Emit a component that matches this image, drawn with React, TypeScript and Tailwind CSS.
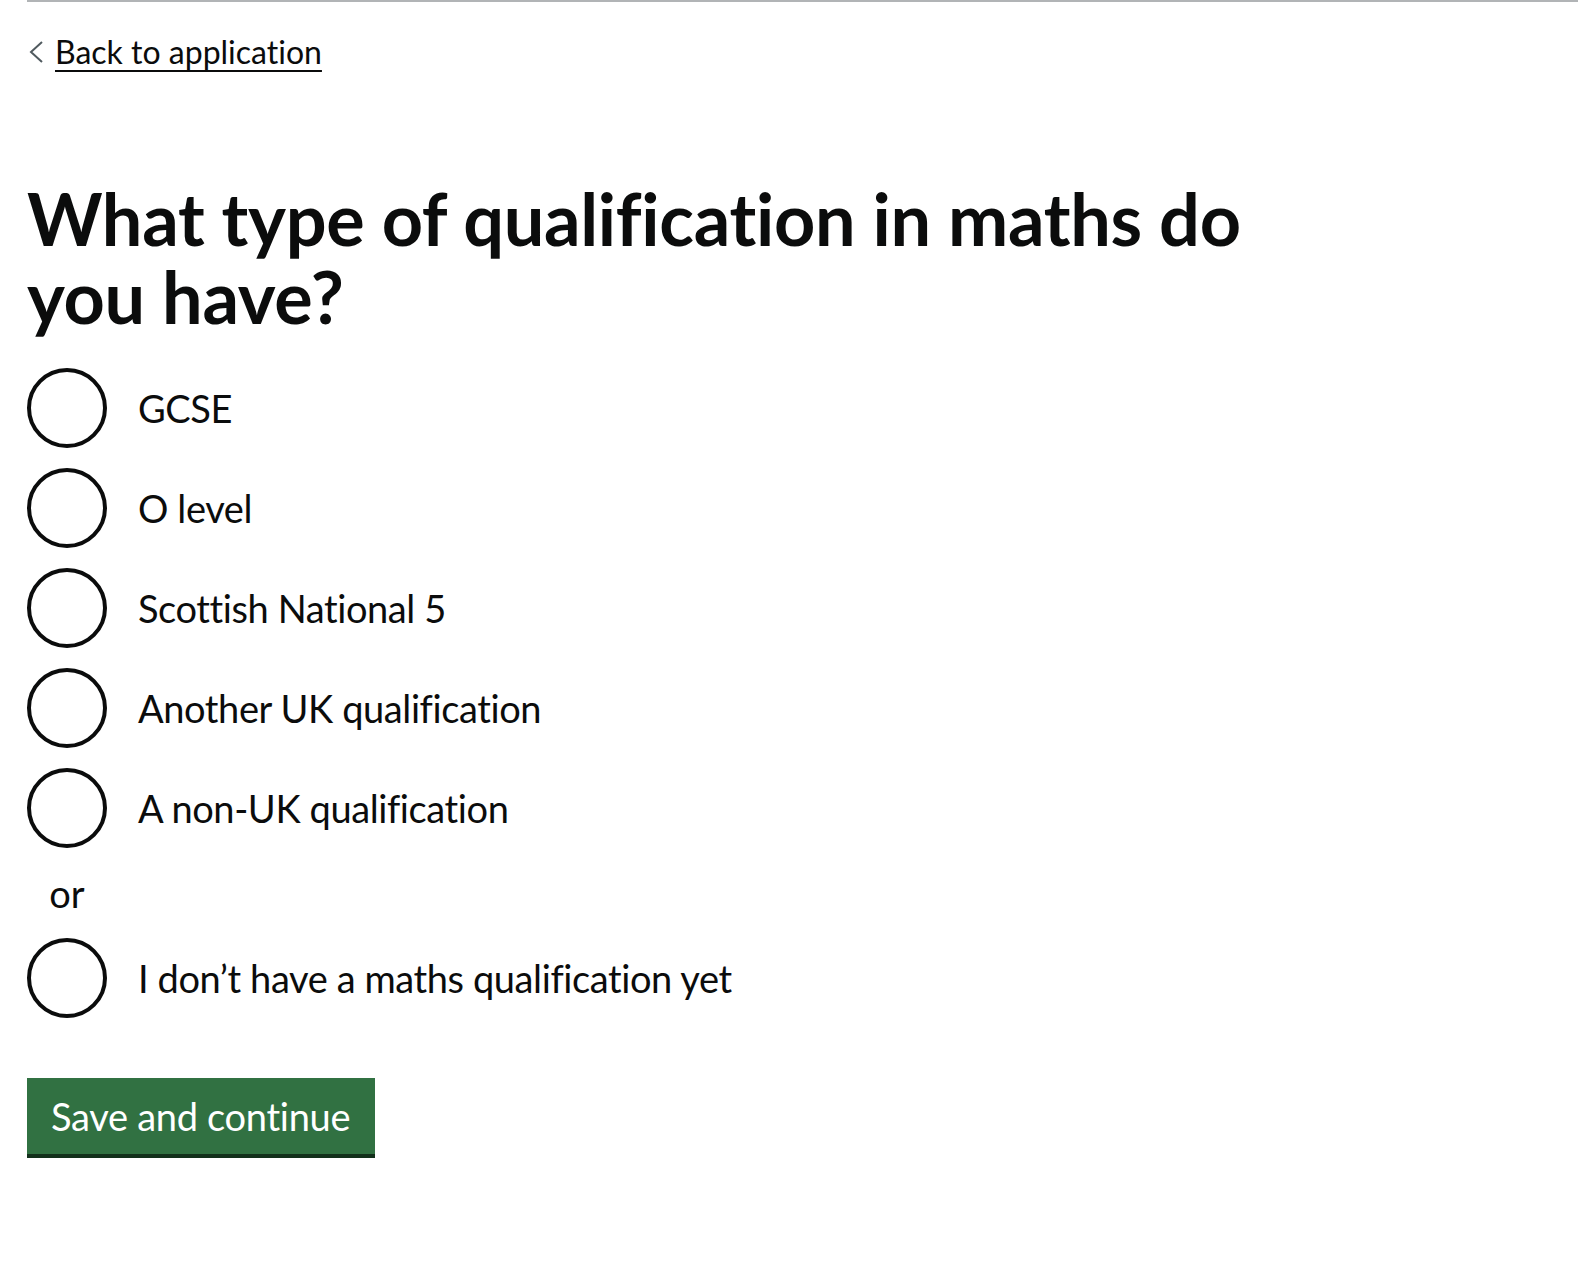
import React from "react";

const options = [
  "GCSE",
  "O level",
  "Scottish National 5",
  "Another UK qualification",
  "A non-UK qualification",
];

function Radio({ label }: { label: string }) {
  return (
    <label className="flex items-center h-[80px] cursor-pointer">
      <input type="radio" name="qual" className="peer sr-only" />
      <span className="block w-[80px] h-[80px] shrink-0 rounded-full border-[4px] border-[#0b0c0c] bg-white box-border" />
      <span className="pl-[31px] text-[38px] leading-[50px] tracking-[-0.4px]">{label}</span>
    </label>
  );
}

export default function App() {
  return (
    <div className="min-h-screen bg-white text-[#0b0c0c] font-['Lato',sans-serif] [font-variant-ligatures:none]">
      <div className="ml-[27px] border-t-2 border-[#b1b4b6]">
        <a href="#" className="mt-[30px] flex items-center h-[40px] w-fit text-[#0b0c0c]">
          <svg width="16" height="24" viewBox="0 0 16 24" className="ml-[1px] mr-[11px] shrink-0">
            <polyline points="14,2 3,12 14,22" fill="none" stroke="#505a5f" strokeWidth="2" />
          </svg>
          <span className="text-[32px] leading-[40px] underline decoration-2 underline-offset-[6px]">
            Back to application
          </span>
        </a>

        <h1 className="mt-[107px] text-[72px] leading-[78px] font-bold tracking-[-0.3px]">
          What type of qualification in maths do
          <br />
          you have?
        </h1>

        <div className="mt-[33px] flex flex-col">
          {options.map((o) => (
            <div key={o} className="mb-[20px]">
              <Radio label={o} />
            </div>
          ))}
          <div className="w-[80px] text-center text-[38px] leading-[50px] mb-[20px]">or</div>
          <Radio label="I don’t have a maths qualification yet" />
        </div>

        <button className="mt-[60px] h-[76px] w-[348px] bg-[#317142] text-white text-[38px] leading-[76px] text-left pl-[24px] tracking-[-0.3px] shadow-[0_4px_0_#12301b]">
          Save and continue
        </button>
      </div>
    </div>
  );
}
